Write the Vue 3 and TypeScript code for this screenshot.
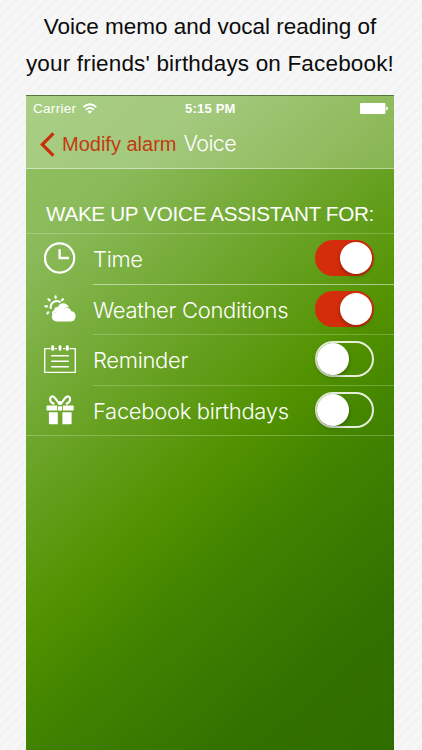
<script setup lang="ts">
import { ref } from 'vue'

interface Option {
  id: string
  label: string
  on: boolean
}

const options = ref<Option[]>([
  { id: 'time', label: 'Time', on: true },
  { id: 'weather', label: 'Weather Conditions', on: true },
  { id: 'reminder', label: 'Reminder', on: false },
  { id: 'birthdays', label: 'Facebook birthdays', on: false },
])
</script>

<template>
  <main class="page">
    <h1 class="caption">
      <span class="line">Voice memo and vocal reading of</span>
      <span class="line wide">your friends' birthdays on Facebook!</span>
    </h1>
    <section class="phone">
      <header class="top">
        <div class="status">
          <span class="carrier">Carrier</span>
          <svg class="wifi" width="15" height="11" viewBox="0 0 15 11">
            <path d="M1.3 4.1Q8 -1.6 14.3 4.1M3.7 6.7Q7.8 3.1 11.9 6.7" fill="none" stroke="#fff" stroke-width="1.7" />
            <path d="M5.4 8.4Q7.8 6.4 10.2 8.4L7.8 10.8Z" fill="#fff" />
          </svg>
          <span class="clock">5:15 PM</span>
          <svg class="battery" width="28" height="11" viewBox="0 0 28 11">
            <rect x="0" y="0" width="25.4" height="11" rx="1" fill="#fff" />
            <path d="M26.2 3.6Q28 4 28 5.5T26.2 7.4Z" fill="#fff" />
          </svg>
        </div>
        <nav class="nav">
          <svg class="back" width="15" height="25" viewBox="0 0 15 25">
            <path d="M13.4 1.4L2.2 12.5L13.4 23.6" fill="none" stroke="#c92e0b" stroke-width="3.2" />
          </svg>
          <span class="parent">Modify alarm</span>
          <span class="title">Voice</span>
        </nav>
      </header>
      <h2 class="heading">WAKE UP VOICE ASSISTANT FOR:</h2>
      <ul class="list">
        <li v-for="o in options" :key="o.id" class="row">
          <div class="icon">
            <svg v-if="o.id === 'time'" width="32" height="32" viewBox="0 0 32 32" fill="none" stroke="#fff">
              <circle cx="15.6" cy="16" r="14.6" stroke-width="2.2" />
              <path d="M15.6 7.2V16H25" stroke-width="2.3" />
            </svg>
            <svg v-else-if="o.id === 'weather'" width="32" height="32" viewBox="0 0 32 32">
              <g fill="none" stroke="#fff" stroke-linecap="round">
                <path d="M6.9 16.8A6.2 6.2 0 0 1 16.6 10.3" stroke-width="2.1" stroke-linecap="butt" />
                <path d="M11.6 4.4V5.8M4.4 7.3L5.6 8.4M18.9 7.2L18 8.2M1.4 14.3H3M3.4 21.4L4.3 20.3" stroke-width="2.2" />
              </g>
              <path d="M10.1 18.3C10 15.8 12.2 14.6 13.9 15C15.6 9.9 22.8 9.6 25.1 15.6C22.5 14.9 21 15.9 19.6 17.2C16.5 15.6 13.3 17.2 12.4 20.1C10.4 20.5 9.2 21.4 8.6 22.7C7.2 20.8 8.3 18.8 10.1 18.3Z" fill="#fff" />
              <path d="M13 29.4C6.3 29.4 6.2 20.9 12.2 20.3C12.7 16.2 16.8 15.1 19.4 16.9C22.4 14.6 26.6 16 27.2 19.3C33.2 18.9 33 29.4 26.8 29.4Z" fill="#fff" />
            </svg>
            <svg v-else-if="o.id === 'reminder'" width="32" height="32" viewBox="0 0 32 32" fill="none" stroke="#fff">
              <path d="M6.6 5.6H.7V29.3H31.3V5.6H25.4M10.5 5.6H13M19 5.6H21.5M7.2 12.7H24.8M7.2 18.2H24.8M7.2 23.7H24.8" stroke-width="1.35" />
              <path d="M8.7 3.6V6.4M16 3.6V6.4M23.3 3.6V6.4" stroke-width="2.9" stroke-linecap="round" />
            </svg>
            <svg v-else width="32" height="32" viewBox="0 0 32 32" fill="#fff">
              <path d="M3.3 12.4H13.2V17.4H3.3Q2.6 17.4 2.6 16.7V13.1Q2.6 12.4 3.3 12.4ZM19 12.4H29Q29.7 12.4 29.7 13.1V16.7Q29.7 17.4 29 17.4H19ZM14 13.2H18.2V17.4H14ZM4.9 19.2H13.8V31.3H5.6Q4.9 31.3 4.9 30.6ZM18.4 19.2H27.6V30.6Q27.6 31.3 26.9 31.3H18.4Z" />
              <path d="M14 9.2C11.6 5.6 10.4 3 7.8 3.5C5.8 4 5.6 7.4 7.2 9Q8.4 10.4 10.4 10.9M18.2 9.2C20.6 5.6 21.8 3 24.4 3.5C26.4 4 26.6 7.4 25 9Q23.8 10.4 21.8 10.9" fill="none" stroke="#fff" stroke-width="2.2" />
              <ellipse cx="16.1" cy="9.9" rx="2.7" ry="2" />
            </svg>
          </div>
          <div class="body">
            <span class="label">{{ o.label }}</span>
            <button class="switch" :class="{ on: o.on }" :aria-label="o.label" @click="o.on = !o.on">
              <span class="knob"></span>
            </button>
          </div>
        </li>
      </ul>
    </section>
  </main>
</template>

<style>
body {
  margin: 0;
  background: #f6f5f5;
}
</style>

<style scoped>
.page {
  box-sizing: border-box;
  width: 422px;
  height: 750px;
  overflow: hidden;
  display: flex;
  flex-direction: column;
  align-items: center;
  padding-right: 2px;
  font-family: "Liberation Sans", Arial, sans-serif;
  background: repeating-linear-gradient(135deg, #f8f7f7 0, #f8f7f7 2.5px, #f4f3f3 4px, #f4f3f3 5.5px, #f8f7f7 7.07px);
}
.caption {
  margin: 0;
  height: 95px;
  box-sizing: border-box;
  padding-top: 8px;
  font-size: 22.5px;
  font-weight: 400;
  line-height: 37px;
  color: #0c0c0c;
  display: flex;
  flex-direction: column;
  align-items: center;
  white-space: nowrap;
}
.wide { letter-spacing: .17px; }
.phone {
  box-sizing: border-box;
  width: 368px;
  height: 655px;
  flex: none;
  border-top: 1px solid #55783f;
  background: linear-gradient(138deg, #91c163 0%, #8aba59 17%, #529200 54%, #428300 65%, #327000 86%, #306d00 100%);
  color: #fff;
}
.top {
  height: 73px;
  box-sizing: border-box;
  border-bottom: 1px solid rgba(255, 255, 255, .45);
  background: rgba(255, 255, 255, .22);
}
.status {
  height: 24px;
  display: grid;
  grid-template-columns: 49px 103px 1fr 28px;
  align-items: center;
  padding: 0 6px 0 7px;
  font-size: 13.5px;
}
.carrier { letter-spacing: .3px; }
.clock {
  font-weight: 700;
  font-size: 13px;
  letter-spacing: .2px;
}
.nav {
  display: flex;
  align-items: center;
  height: 48px;
  padding-left: 14px;
  white-space: nowrap;
}
.parent {
  margin-left: 7px;
  width: 121.5px;
  font-size: 20px;
  color: #c23a12;
}
.title {
  font-family: Inter, "Liberation Sans", sans-serif;
  font-weight: 300;
  font-size: 21.5px;
  letter-spacing: -.6px;
  padding-bottom: 2px;
}
.heading {
  margin: 0;
  height: 64px;
  box-sizing: border-box;
  padding: 32px 0 0 20px;
  font-size: 20.7px;
  line-height: 26px;
  font-weight: 400;
  letter-spacing: -.33px;
  white-space: nowrap;
}
.list {
  list-style: none;
  margin: 0;
  padding: 0;
  border-top: 1px solid rgba(255, 255, 255, .22);
  border-bottom: 1px solid rgba(255, 255, 255, .25);
}
.row {
  height: 50.5px;
  display: flex;
  align-items: stretch;
}
.row:last-child { height: 49.5px; }
.icon {
  width: 67px;
  box-sizing: border-box;
  padding: 0 0 3px 18px;
  display: flex;
  align-items: center;
}
.body {
  flex: 1;
  display: flex;
  align-items: center;
  justify-content: space-between;
  padding: 0 20px 1px 0;
  border-bottom: 1px solid rgba(255, 255, 255, .22);
}
.row:first-child .body { border-color: rgba(255, 255, 255, .5); }
.row:last-child .body { border-bottom: 0; }
.label {
  padding-top: 2px;
  font-family: Inter, "Liberation Sans", sans-serif;
  font-weight: 300;
  font-size: 22px;
  letter-spacing: -.32px;
  white-space: nowrap;
}
.switch {
  box-sizing: border-box;
  width: 59px;
  height: 36px;
  padding: 0;
  border: 2px solid rgba(255, 255, 255, .85);
  border-radius: 18px;
  background: transparent;
  display: flex;
  align-items: center;
}
.switch.on {
  border-color: #d42d0b;
  background: #d42d0b;
  justify-content: flex-end;
}
.knob {
  width: 32px;
  height: 32px;
  border-radius: 50%;
  background: #fff;
  box-shadow: 0 2px 4px rgba(0, 0, 0, .3);
}
</style>
